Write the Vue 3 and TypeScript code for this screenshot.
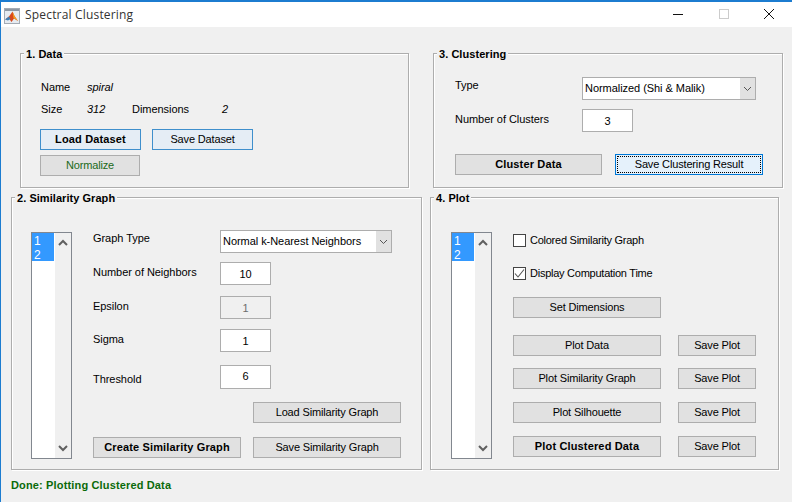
<script setup lang="ts">
// MATLAB GUIDE style window: four etched panels, two of them with a listbox
const listItems: string[] = ['1', '2']
const plotRows: { label: string; bold?: boolean }[] = [
  { label: 'Plot Data' },
  { label: 'Plot Similarity Graph' },
  { label: 'Plot Silhouette' },
  { label: 'Plot Clustered Data', bold: true },
]
</script>

<template>
  <div class="window">
    <header class="titlebar">
      <svg class="app-icon" width="16" height="16" viewBox="0 0 16 16">
        <rect x="0.5" y="0.5" width="15" height="15" fill="#e6ebf1" stroke="#a3abb5" />
        <rect x="1" y="1" width="14" height="2" fill="#8d97a3" />
        <path d="M1 11.5 L5 8.5 L8.5 3.5 L10.5 8 L14 13 L10 10.5 L7.5 14 L5 10.5 Z" fill="#d9481c" />
        <path d="M1 11.5 L5 8.5 L6.5 11 L4 12.5 Z" fill="#3f7fb5" />
        <path d="M8.5 3.5 L10.5 8 L14 13 L9.5 10 Z" fill="#f0a020" />
      </svg>
      <span class="app-title">Spectral Clustering</span>
      <div class="win-controls">
        <svg width="12" height="12" viewBox="0 0 12 12"><path d="M1 6.5 H11" stroke="#111" stroke-width="1" /></svg>
        <svg width="12" height="12" viewBox="0 0 12 12"><rect x="1.5" y="1.5" width="9" height="9" fill="none" stroke="#ccc" /></svg>
        <svg width="12" height="12" viewBox="0 0 12 12"><path d="M1 1 L11 11 M11 1 L1 11" stroke="#111" stroke-width="1" /></svg>
      </div>
    </header>

    <main class="columns">
      <div class="col col-left">
        <section class="panel panel-data">
          <h2 class="panel-title">1. Data</h2>
          <div class="info">
            <span>Name</span><em>spiral</em><span></span><span></span>
            <span>Size</span><em>312</em><span>Dimensions</span><em>2</em>
          </div>
          <div class="data-btns">
            <button class="btn btn-hi btn-bold">Load Dataset</button>
            <button class="btn btn-hi">Save Dataset</button>
          </div>
          <button class="btn btn-norm">Normalize</button>
        </section>

        <section class="panel panel-graph">
          <h2 class="panel-title">2. Similarity Graph</h2>
          <div class="listbox">
            <ul class="list-items">
              <li v-for="item in listItems" :key="item">{{ item }}</li>
            </ul>
            <div class="scroll">
              <svg width="10" height="7" viewBox="0 0 10 7"><path d="M1 6 L5 2 L9 6" fill="none" stroke="#606060" stroke-width="2" /></svg>
              <svg width="10" height="7" viewBox="0 0 10 7"><path d="M1 1 L5 5 L9 1" fill="none" stroke="#606060" stroke-width="2" /></svg>
            </div>
          </div>
          <div class="graph-side">
            <div class="graph-form">
              <label class="lbl lbl-top">Graph Type</label>
              <div class="select select-graph">
                <span>Normal k-Nearest Neighbors</span>
                <i class="select-arrow"><svg width="9" height="6" viewBox="0 0 9 6"><path d="M1 1 L4.5 4.5 L8 1" fill="none" stroke="#555" /></svg></i>
              </div>
              <label class="lbl">Number of Neighbors</label>
              <div class="field">10</div>
              <label class="lbl">Epsilon</label>
              <div class="field field-off">1</div>
              <label class="lbl">Sigma</label>
              <div class="field">1</div>
              <label class="lbl lbl-low">Threshold</label>
              <div class="field field-tall">6</div>
            </div>
            <div class="graph-btns">
              <button class="btn btn-load-graph">Load Similarity Graph</button>
              <button class="btn btn-bold">Create Similarity Graph</button>
              <button class="btn">Save Similarity Graph</button>
            </div>
          </div>
        </section>

        <p class="status">Done: Plotting Clustered Data</p>
      </div>

      <div class="col col-right">
        <section class="panel panel-cluster">
          <h2 class="panel-title">3. Clustering</h2>
          <div class="cluster-form">
            <label class="lbl lbl-top">Type</label>
            <div class="select select-cluster">
              <span>Normalized (Shi &amp; Malik)</span>
              <i class="select-arrow"><svg width="9" height="6" viewBox="0 0 9 6"><path d="M1 1 L4.5 4.5 L8 1" fill="none" stroke="#555" /></svg></i>
            </div>
            <label class="lbl">Number of Clusters</label>
            <div class="field">3</div>
          </div>
          <div class="cluster-btns">
            <button class="btn btn-bold">Cluster Data</button>
            <button class="btn btn-focus"><span>Save Clustering Result</span></button>
          </div>
        </section>

        <section class="panel panel-plot">
          <h2 class="panel-title">4. Plot</h2>
          <div class="listbox">
            <ul class="list-items">
              <li v-for="item in listItems" :key="item">{{ item }}</li>
            </ul>
            <div class="scroll">
              <svg width="10" height="7" viewBox="0 0 10 7"><path d="M1 6 L5 2 L9 6" fill="none" stroke="#606060" stroke-width="2" /></svg>
              <svg width="10" height="7" viewBox="0 0 10 7"><path d="M1 1 L5 5 L9 1" fill="none" stroke="#606060" stroke-width="2" /></svg>
            </div>
          </div>
          <div class="plot-side">
            <div class="check-row">
              <i class="check"></i><span>Colored Similarity Graph</span>
            </div>
            <div class="check-row">
              <i class="check">
                <svg width="11" height="11" viewBox="0 0 11 11"><path d="M1 5.5 L4 9 L10 1.5" fill="none" stroke="#555" stroke-width="1.1" /></svg>
              </i>
              <span>Display Computation Time</span>
            </div>
            <button class="btn btn-dims">Set Dimensions</button>
            <div class="plot-grid">
              <template v-for="row in plotRows" :key="row.label">
                <button class="btn" :class="{ 'btn-bold': row.bold }">{{ row.label }}</button>
                <button class="btn">Save Plot</button>
              </template>
            </div>
          </div>
        </section>
      </div>
    </main>
  </div>
</template>

<style>
html,
body {
  margin: 0;
  background: #f0f0f0;
  overflow: hidden;
}
</style>

<style scoped>
.window {
  width: 791px;
  height: 500px;
  border-top: 2px solid #1c7cd0;
  border-left: 1px solid #1c7cd0;
  background: #f0f0f0;
  color: #000;
  font-family: "Liberation Sans", Arial, sans-serif;
  font-size: 11px;
  letter-spacing: -0.05px;
  overflow: hidden;
}

.titlebar {
  display: flex;
  align-items: center;
  height: 25px;
  background: #fff;
  padding-left: 3px;
}

.app-icon {
  margin-top: 2px;
}

.app-title {
  margin-left: 5px;
  font-family: "Open Sans", sans-serif;
  font-size: 12px;
  letter-spacing: 0.18px;
  color: #333;
}

.win-controls {
  display: flex;
  gap: 33.5px;
  margin-left: auto;
  margin-right: 17px;
  margin-top: -1px;
}

.columns {
  display: grid;
  grid-template-columns: 429px 1fr;
  padding-top: 26px;
}

.panel {
  position: relative;
  box-sizing: border-box;
  border: 1px solid #adadad;
  box-shadow: 1px 1px 0 #fff, inset 1px 1px 0 #fff;
}

.panel-title {
  position: absolute;
  top: -7px;
  left: 3px;
  margin: 0;
  padding: 0 2px;
  background: #f0f0f0;
  font-size: 11px;
  font-weight: 700;
  letter-spacing: 0.05px;
  line-height: 14px;
  white-space: nowrap;
}

.btn {
  box-sizing: border-box;
  height: 21px;
  padding: 0 0 2px;
  border: 1px solid #adadad;
  background: #e1e1e1;
  color: #000;
  font: inherit;
  letter-spacing: -0.15px;
}

.btn-bold {
  font-weight: 700;
  letter-spacing: 0.15px;
}

.btn-hi {
  width: 101px;
  border-color: #3f8fcc;
  background: #e5edf5;
}

.btn-focus {
  border: 1px solid #0078d7;
  background: #e5f1fb;
  padding: 1px;
}

.btn-focus span {
  display: flex;
  align-items: center;
  justify-content: center;
  height: 100%;
  padding-bottom: 1px;
  border: 1px dotted #000;
  box-sizing: border-box;
}

/* panel 1 */
.panel-data {
  width: 389px;
  height: 135px;
  margin-left: 19px;
  padding: 22px 0 0 19px;
}

.info {
  display: grid;
  grid-template-columns: 46px 45px 90px auto;
  grid-auto-rows: 22px;
  align-items: center;
  justify-content: start;
  margin-left: 1px;
}

.data-btns {
  display: flex;
  gap: 11px;
  margin-top: 9px;
}

.btn-norm {
  display: block;
  width: 100px;
  margin-top: 5px;
  color: #1a6a1a;
}

/* panel 2 */
.panel-graph {
  display: flex;
  align-items: flex-start;
  width: 411px;
  height: 273px;
  margin: 9px 0 0 10px;
  padding: 34px 0 0 19px;
}

.listbox {
  display: flex;
  flex: none;
  box-sizing: border-box;
  width: 41px;
  height: 227px;
  border: 1px solid #82878f;
  background: #fff;
}

.list-items {
  flex: none;
  width: 22px;
  margin: 0;
  padding: 0;
  list-style: none;
  align-self: flex-start;
  background: #3399ff;
  color: #fff;
  font-size: 12px;
}

.list-items li {
  height: 14px;
  padding-left: 2px;
  line-height: 16px;
}

.scroll {
  display: flex;
  flex: 1;
  flex-direction: column;
  align-items: center;
  justify-content: space-between;
  margin-left: 1px;
  padding: 6px 0;
  background: #f0f0f0;
}

.graph-side {
  margin-left: 21px;
  margin-top: -2px;
}

.graph-form {
  display: grid;
  grid-template-columns: 127px auto;
  grid-template-rows: 32px 34px 33px 36px 37px;
  align-items: start;
  justify-content: start;
}

.lbl {
  margin-top: 2px;
  line-height: 16px;
}

.lbl-top {
  margin-top: 0;
}

.lbl-low {
  margin-top: 6px;
}

.select {
  display: flex;
  align-items: center;
  justify-content: space-between;
  box-sizing: border-box;
  height: 23px;
  padding-left: 2px;
  border: 1px solid #adadad;
  background: #fff;
}

.select > span {
  margin-top: -1px;
}

.select-graph {
  width: 172px;
}

.select-cluster {
  width: 174px;
}

.select-arrow {
  display: flex;
  align-items: center;
  justify-content: center;
  width: 15px;
  height: 100%;
  background: #e1e1e1;
}

.field {
  display: flex;
  align-items: center;
  justify-content: center;
  box-sizing: border-box;
  width: 51px;
  height: 23px;
  border: 1px solid #adadad;
  background: #fff;
}

.field-off {
  background: #f0f0f0;
  color: #6d6d6d;
}

.field-tall {
  height: 24px;
  padding-bottom: 3px;
}

.graph-btns {
  display: grid;
  grid-template-columns: 148px 148px;
  grid-auto-rows: 21px;
  column-gap: 12px;
  row-gap: 14px;
}

.btn-load-graph {
  grid-column: 2;
}

/* status */
.status {
  margin: 7px 0 0 10px;
  color: #0a6a0a;
  font-weight: 700;
  letter-spacing: 0.15px;
  line-height: 16px;
}

/* panel 3 */
.panel-cluster {
  width: 350px;
  height: 135px;
  margin-left: 3px;
  padding: 23px 0 0 21px;
}

.cluster-form {
  display: grid;
  grid-template-columns: 127px auto;
  grid-template-rows: 32px 23px;
  align-items: start;
  justify-content: start;
}

.cluster-btns {
  display: grid;
  grid-template-columns: 147px 148px;
  grid-auto-rows: 21px;
  column-gap: 13px;
  margin-top: 22px;
}

/* panel 4 */
.panel-plot {
  display: flex;
  align-items: flex-start;
  width: 349px;
  height: 273px;
  margin-top: 9px;
  padding: 34px 0 0 20px;
}

.plot-side {
  margin-left: 21px;
}

.check-row {
  display: flex;
  align-items: flex-start;
  gap: 4px;
  height: 33px;
  padding-top: 2px;
  box-sizing: border-box;
  letter-spacing: -0.25px;
  line-height: 13px;
}

.check-row:nth-child(2) {
  height: 32px;
}

.check {
  display: flex;
  align-items: center;
  justify-content: center;
  box-sizing: border-box;
  width: 13px;
  height: 13px;
  border: 1px solid #444;
  background: #fff;
}

.btn-dims {
  display: block;
  width: 148px;
}

.plot-grid {
  display: grid;
  grid-template-columns: 148px 78px;
  grid-template-rows: 33px 34px 34px 21px;
  column-gap: 17px;
  align-items: start;
  margin-top: 17px;
}
</style>
